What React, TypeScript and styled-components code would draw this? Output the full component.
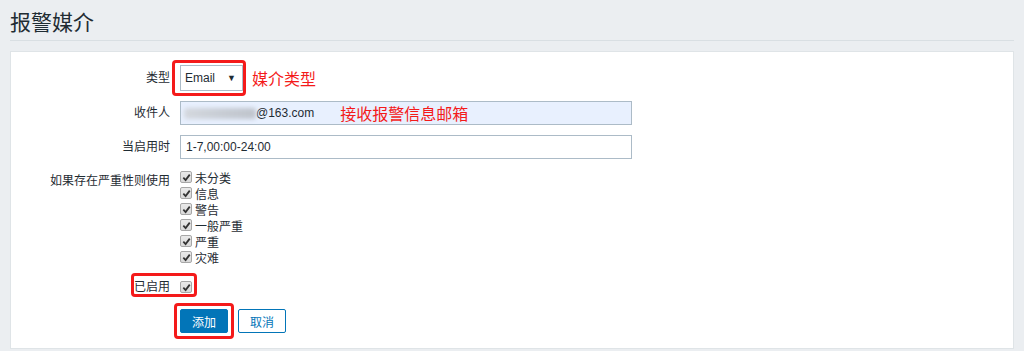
import React from "react";
import styled, { createGlobalStyle } from "styled-components";

const GlobalStyle = createGlobalStyle`
  html, body {
    margin: 0;
    padding: 0;
    background: #ebeef1;
    font-family: "Liberation Sans", Arial, "Noto Sans CJK SC", sans-serif;
    font-size: 12px;
    color: #1f2c33;
  }
`;

const Page = styled.div`
  padding: 0 10px;
  height: 351px;
  box-sizing: border-box;
`;

const Header = styled.div`
  height: 41px;
  box-sizing: border-box;
  padding-top: 2px;
  border-bottom: 1px solid #d9dfe3;
  display: flex;
  align-items: center;
`;

const Title = styled.h1`
  margin: 0;
  font-size: 21px;
  font-weight: normal;
  color: #1f2c33;
`;

const Panel = styled.div`
  margin-top: 10px;
  background: #ffffff;
  border: 1px solid #dfe4e7;
  padding: 13px 0 15px;
  display: flex;
  flex-direction: column;
  gap: 10px;
`;

const Row = styled.div<{ $top?: boolean }>`
  position: relative;
  display: flex;
  align-items: ${({ $top }) => ($top ? "flex-start" : "center")};
  gap: 10px;
  min-height: 24px;
`;

const Label = styled.div<{ $pad?: number }>`
  width: 159px;
  flex: none;
  text-align: right;
  padding-top: ${({ $pad }) => $pad || 0}px;
  line-height: 14px;
`;

const Field = styled.div`
  display: flex;
  align-items: center;
`;

const Marked = styled.span`
  position: relative;
  display: inline-flex;
`;

const Ring = styled.span<{ $t: number; $l: number; $r: number; $b: number }>`
  position: absolute;
  top: ${({ $t }) => $t}px;
  left: ${({ $l }) => $l}px;
  right: ${({ $r }) => $r}px;
  bottom: ${({ $b }) => $b}px;
  border: 3px solid #f41a1a;
  border-radius: 4px;
  pointer-events: none;
`;

const RowRing = styled.span`
  position: absolute;
  left: 120px;
  top: -2px;
  width: 66px;
  height: 24px;
  box-sizing: border-box;
  border: 3px solid #f41a1a;
  border-radius: 4px;
`;

const Select = styled.div`
  width: 63px;
  height: 26px;
  box-sizing: border-box;
  border: 1px solid #acbbc7;
  background: #fff;
  display: flex;
  align-items: center;
  justify-content: space-between;
  padding: 0 6px 0 4px;
  font-size: 12px;
`;

const Arrow = styled.span`
  font-size: 9px;
  color: #1f2c33;
`;

const Note = styled.span<{ $gap: number }>`
  margin-left: ${({ $gap }) => $gap}px;
  color: #f41a1a;
  font-size: 16px;
  font-family: "Noto Sans CJK SC", sans-serif;
`;

const TextBox = styled.div<{ $fill?: boolean }>`
  width: 452px;
  height: 24px;
  box-sizing: border-box;
  border: 1px solid #acbbc7;
  background: ${({ $fill }) => ($fill ? "#e8f0fe" : "#ffffff")};
  display: flex;
  align-items: center;
  padding: 0 5px;
  font-size: 12px;
  white-space: nowrap;
`;

const Blur = styled.span`
  width: 72px;
  height: 11px;
  margin-left: -2px;
  background: linear-gradient(90deg, #d4d8de, #c6cbd3 60%, #bfc4cc);
  border-radius: 3px;
  filter: blur(2px);
  flex: none;
`;

const CheckList = styled.div`
  display: flex;
  flex-direction: column;
`;

const CheckItem = styled.div`
  height: 16px;
  display: flex;
  align-items: center;
  gap: 3px;
`;

const Box = styled.span`
  width: 12px;
  height: 12px;
  box-sizing: border-box;
  border: 1px solid #a7a7a7;
  border-radius: 2px;
  background: linear-gradient(#e9e9e9, #d9d9d9);
  display: inline-flex;
  align-items: center;
  justify-content: center;
  flex: none;
`;

const Buttons = styled.div`
  display: flex;
  align-items: center;
  gap: 10px;
`;

const Button = styled.button<{ $primary?: boolean }>`
  width: 48px;
  height: 24px;
  box-sizing: border-box;
  border: 1px solid #0275b8;
  border-radius: 2px;
  background: ${({ $primary }) => ($primary ? "#0275b8" : "#ffffff")};
  color: ${({ $primary }) => ($primary ? "#ffffff" : "#0275b8")};
  font-family: "Noto Sans CJK SC", sans-serif;
  font-size: 12px;
  padding: 0;
  cursor: pointer;
`;

const Check = () => (
  <Box>
    <svg width="9" height="9" viewBox="0 0 10 10">
      <path d="M1.5 5.2 L4 7.8 L8.6 1.8" fill="none" stroke="#333" strokeWidth="2" />
    </svg>
  </Box>
);

const severities = ["未分类", "信息", "警告", "一般严重", "严重", "灾难"];

export default function App() {
  return (
    <>
      <GlobalStyle />
      <Page>
        <Header>
          <Title>报警媒介</Title>
        </Header>
        <Panel>
          <Row>
            <Label>类型</Label>
            <Field>
              <Marked>
                <Select>
                  <span>Email</span>
                  <Arrow>▼</Arrow>
                </Select>
                <Ring $t={-5} $l={-8} $r={-3} $b={-5} />
              </Marked>
              <Note $gap={9}>媒介类型</Note>
            </Field>
          </Row>
          <Row>
            <Label>收件人</Label>
            <TextBox $fill>
              <Blur />
              <span>@163.com</span>
              <Note $gap={26}>接收报警信息邮箱</Note>
            </TextBox>
          </Row>
          <Row>
            <Label>当启用时</Label>
            <TextBox>1-7,00:00-24:00</TextBox>
          </Row>
          <Row $top>
            <Label $pad={5}>如果存在严重性则使用</Label>
            <CheckList>
              {severities.map((s) => (
                <CheckItem key={s}>
                  <Check />
                  <span>{s}</span>
                </CheckItem>
              ))}
            </CheckList>
          </Row>
          <Row>
            <Label>已启用</Label>
            <Check />
            <RowRing />
          </Row>
          <Row>
            <Label />
            <Buttons>
              <Marked>
                <Button $primary>添加</Button>
                <Ring $t={-6} $l={-6} $r={-6} $b={-6} />
              </Marked>
              <Button>取消</Button>
            </Buttons>
          </Row>
        </Panel>
      </Page>
    </>
  );
}
